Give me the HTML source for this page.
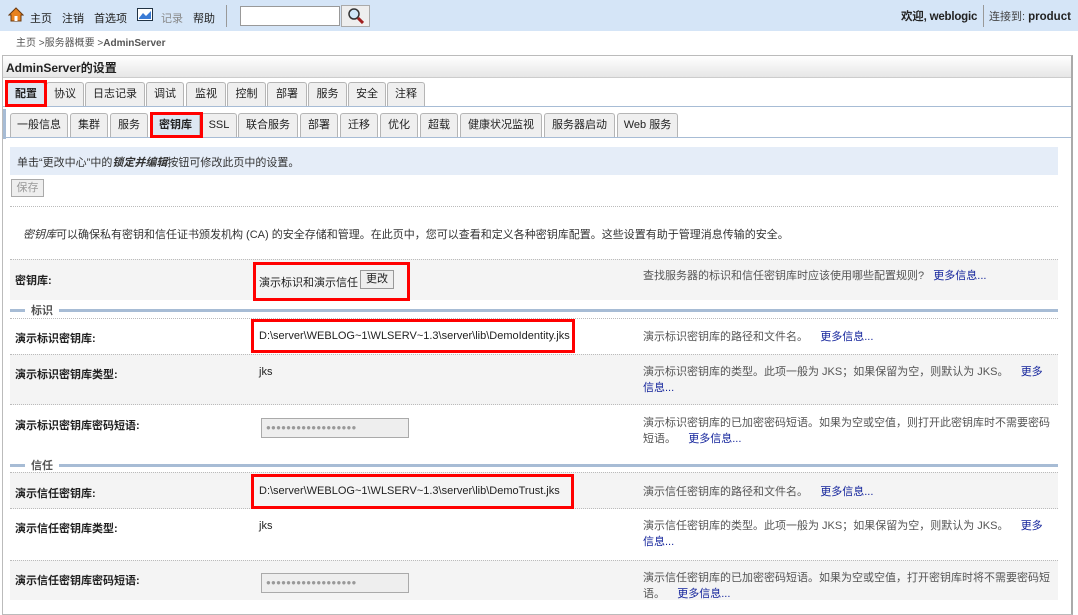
<!DOCTYPE html>
<html><head><meta charset="utf-8"><style>
*{margin:0;padding:0;box-sizing:border-box}
body{width:1078px;height:600px;overflow:hidden;background:#fff;font-family:"Liberation Sans","Noto Sans CJK SC",sans-serif;font-size:11px;color:#222;position:relative}
.a{position:absolute;white-space:nowrap}
.top{left:0;top:0;width:1078px;height:31px;background:#d5e5f7}
.tab{position:absolute;height:24px;border:1px solid #b5b5b5;border-bottom:none;background:#efefef;border-radius:3px 3px 0 0;text-align:center;line-height:22px;font-size:11px}
.red{position:absolute;border:3px solid #f00}
.lbl{position:absolute;left:15px;font-weight:bold;font-size:11px}
.val{position:absolute;left:259px;font-size:11px}
.desc{position:absolute;left:643px;width:410px;font-size:11px;color:#555;line-height:16px;white-space:normal}
.desc b{font-weight:normal;color:#13239b}
.dot{position:absolute;left:10px;width:1048px;border-top:1px dotted #bbb}
.gray{position:absolute;left:10px;width:1048px;background:#f4f4f4}
.pw{position:absolute;left:261px;width:148px;height:20px;border:1px solid #aaa;background:#eee;color:#999;font-size:8px;line-height:18px;padding-left:4px;letter-spacing:0.2px;overflow:hidden}
.sec{position:absolute;left:10px;width:1048px;height:3px;border-top:3px solid #a7bcd5}
.sec span{position:absolute;left:15px;top:-10px;background:#fff;padding:0 6px;font-weight:bold;color:#555}
</style></head><body>
<div class="a top"></div>
<svg class="a" style="left:8px;top:7px" width="16" height="15" viewBox="0 0 16 15"><path d="M1 8 L8 1 L15 8 L13 8 L13 14 L3 14 L3 8 Z" fill="#e8821e" stroke="#6b3a10" stroke-width="1"/><rect x="6.5" y="9" width="3" height="5" fill="#fff"/></svg>
<div class="a" style="left:30px;top:10px">主页</div>
<div class="a" style="left:62px;top:10px">注销</div>
<div class="a" style="left:94px;top:10px">首选项</div>
<svg class="a" style="left:137px;top:8px" width="16" height="13"><rect x="0.5" y="0.5" width="15" height="12" fill="#fff" stroke="#234"/><path d="M2 10 L6 5 L9 8 L14 3 L14 11 L2 11Z" fill="#3a7bd5"/></svg>
<div class="a" style="left:161px;top:10px;color:#888">记录</div>
<div class="a" style="left:193px;top:10px">帮助</div>
<div class="a" style="left:226px;top:5px;width:1px;height:22px;background:#999"></div>
<div class="a" style="left:240px;top:6px;width:100px;height:20px;border:1px solid #999;background:#fff"></div>
<div class="a" style="left:341px;top:5px;width:29px;height:22px;border:1px solid #aaa;background:#eee"></div>
<svg class="a" style="left:347px;top:7px" width="17" height="17"><circle cx="7" cy="7" r="5" fill="#cfe6f7" stroke="#333" stroke-width="1.5"/><path d="M11 11 L16 16" stroke="#a02020" stroke-width="3"/></svg>
<div class="a" style="left:901px;top:8px;font-weight:bold;font-size:11.5px;letter-spacing:-0.2px">欢迎, weblogic</div>
<div class="a" style="left:983px;top:5px;width:1px;height:22px;background:#999"></div>
<div class="a" style="left:989px;top:8px;font-size:11px;color:#444">连接到: <b style="color:#222;font-size:11.5px">product</b></div>
<div class="a" style="left:16px;top:34px;font-size:10px;color:#555">主页 &gt;服务器概要 &gt;<b>AdminServer</b></div>
<div class="a" style="left:2px;top:55px;width:1071px;height:560px;border:1px solid #bbb;border-right:2px solid #aaa"></div>
<div class="a" style="left:3px;top:56px;width:1068px;height:22px;background:linear-gradient(#fff,#e6e6e6);border-bottom:1px solid #ccc"></div>
<div class="a" style="left:6px;top:59px;font-weight:bold;font-size:12px">AdminServer的设置</div>
<div class="a" style="left:3px;top:106px;width:1068px;border-top:1px solid #a7bcd5"></div>
<div class="tab" style="left:7px;top:82px;width:38px;background:#dde7f2;font-weight:bold">配置</div>
<div class="tab" style="left:46px;top:82px;width:38px">协议</div>
<div class="tab" style="left:85px;top:82px;width:60px">日志记录</div>
<div class="tab" style="left:146px;top:82px;width:38px">调试</div>
<div class="tab" style="left:186px;top:82px;width:40px">监视</div>
<div class="tab" style="left:227px;top:82px;width:39px">控制</div>
<div class="tab" style="left:267px;top:82px;width:40px">部署</div>
<div class="tab" style="left:308px;top:82px;width:39px">服务</div>
<div class="tab" style="left:348px;top:82px;width:38px">安全</div>
<div class="tab" style="left:387px;top:82px;width:38px">注释</div>
<div class="red" style="left:5px;top:80px;width:42px;height:27px"></div>
<div class="a" style="left:3px;top:109px;width:3px;height:30px;background:#a7bcd5"></div>
<div class="a" style="left:6px;top:137px;width:1065px;border-top:1px solid #a7bcd5"></div>
<div class="tab" style="left:10px;top:113px;width:58px">一般信息</div>
<div class="tab" style="left:70px;top:113px;width:38px">集群</div>
<div class="tab" style="left:110px;top:113px;width:38px">服务</div>
<div class="tab" style="left:151px;top:113px;width:49px;background:#dde7f2;font-weight:bold">密钥库</div>
<div class="tab" style="left:201px;top:113px;width:36px">SSL</div>
<div class="tab" style="left:238px;top:113px;width:60px">联合服务</div>
<div class="tab" style="left:300px;top:113px;width:38px">部署</div>
<div class="tab" style="left:340px;top:113px;width:38px">迁移</div>
<div class="tab" style="left:380px;top:113px;width:38px">优化</div>
<div class="tab" style="left:420px;top:113px;width:38px">超载</div>
<div class="tab" style="left:460px;top:113px;width:82px">健康状况监视</div>
<div class="tab" style="left:544px;top:113px;width:71px">服务器启动</div>
<div class="tab" style="left:617px;top:113px;width:61px">Web 服务</div>
<div class="red" style="left:150px;top:112px;width:53px;height:26px"></div>
<div class="a" style="left:10px;top:147px;width:1048px;height:28px;background:#e5edf8"></div>
<div class="a" style="left:17px;top:154px;color:#333">单击“更改中心”中的<i><b>锁定并编辑</b></i>按钮可修改此页中的设置。</div>
<div class="a" style="left:11px;top:179px;width:33px;height:18px;border:1px solid #aaa;background:#eee;color:#999;text-align:center;line-height:16px">保存</div>
<div class="dot" style="top:206px"></div>
<div class="a" style="left:23px;top:226px;color:#333"><i>密钥库</i>可以确保私有密钥和信任证书颁发机构 (CA) 的安全存储和管理。在此页中，您可以查看和定义各种密钥库配置。这些设置有助于管理消息传输的安全。</div>
<div class="gray" style="top:259px;height:41px;border-top:1px dotted #bbb"></div>
<div class="lbl" style="top:272px">密钥库:</div>
<div class="val" style="top:274px">演示标识和演示信任</div>
<div class="a" style="left:360px;top:270px;width:34px;height:19px;border:1px solid #999;background:#eee;text-align:center;line-height:17px">更改</div>
<div class="red" style="left:253px;top:262px;width:157px;height:39px"></div>
<div class="desc" style="top:268px">查找服务器的标识和信任密钥库时应该使用哪些配置规则?&nbsp;&nbsp; <b>更多信息...</b></div>
<div class="sec" style="top:309px"><span>标识</span></div>
<div class="dot" style="top:318px"></div>
<div class="lbl" style="top:330px">演示标识密钥库:</div>
<div class="val" style="top:330px">D:\server\WEBLOG~1\WLSERV~1.3\server\lib\DemoIdentity.jks</div>
<div class="red" style="left:251px;top:319px;width:324px;height:34px"></div>
<div class="desc" style="top:329px">演示标识密钥库的路径和文件名。&nbsp;&nbsp;&nbsp; <b>更多信息...</b></div>
<div class="gray" style="top:354px;height:51px;border-top:1px dotted #bbb;border-bottom:1px dotted #bbb"></div>
<div class="lbl" style="top:366px">演示标识密钥库类型:</div>
<div class="val" style="top:366px">jks</div>
<div class="desc" style="top:364px">演示标识密钥库的类型。此项一般为 JKS；如果保留为空，则默认为 JKS。&nbsp;&nbsp;&nbsp; <b>更多信息...</b></div>
<div class="lbl" style="top:417px">演示标识密钥库密码短语:</div>
<div class="pw" style="top:418px">●●●●●●●●●●●●●●●●●●</div>
<div class="desc" style="top:415px">演示标识密钥库的已加密密码短语。如果为空或空值，则打开此密钥库时不需要密码短语。&nbsp;&nbsp;&nbsp; <b>更多信息...</b></div>
<div class="sec" style="top:464px"><span>信任</span></div>
<div class="gray" style="top:472px;height:37px;border-top:1px dotted #bbb;border-bottom:1px dotted #bbb"></div>
<div class="lbl" style="top:485px">演示信任密钥库:</div>
<div class="val" style="top:485px">D:\server\WEBLOG~1\WLSERV~1.3\server\lib\DemoTrust.jks</div>
<div class="red" style="left:251px;top:474px;width:323px;height:35px"></div>
<div class="desc" style="top:484px">演示信任密钥库的路径和文件名。&nbsp;&nbsp;&nbsp; <b>更多信息...</b></div>
<div class="lbl" style="top:520px">演示信任密钥库类型:</div>
<div class="val" style="top:520px">jks</div>
<div class="desc" style="top:518px">演示信任密钥库的类型。此项一般为 JKS；如果保留为空，则默认为 JKS。&nbsp;&nbsp;&nbsp; <b>更多信息...</b></div>
<div class="gray" style="top:560px;height:40px;border-top:1px dotted #bbb"></div>
<div class="lbl" style="top:572px">演示信任密钥库密码短语:</div>
<div class="pw" style="top:573px">●●●●●●●●●●●●●●●●●●</div>
<div class="desc" style="top:570px">演示信任密钥库的已加密密码短语。如果为空或空值，打开密钥库时将不需要密码短语。&nbsp;&nbsp;&nbsp; <b>更多信息...</b></div>
</body></html>
